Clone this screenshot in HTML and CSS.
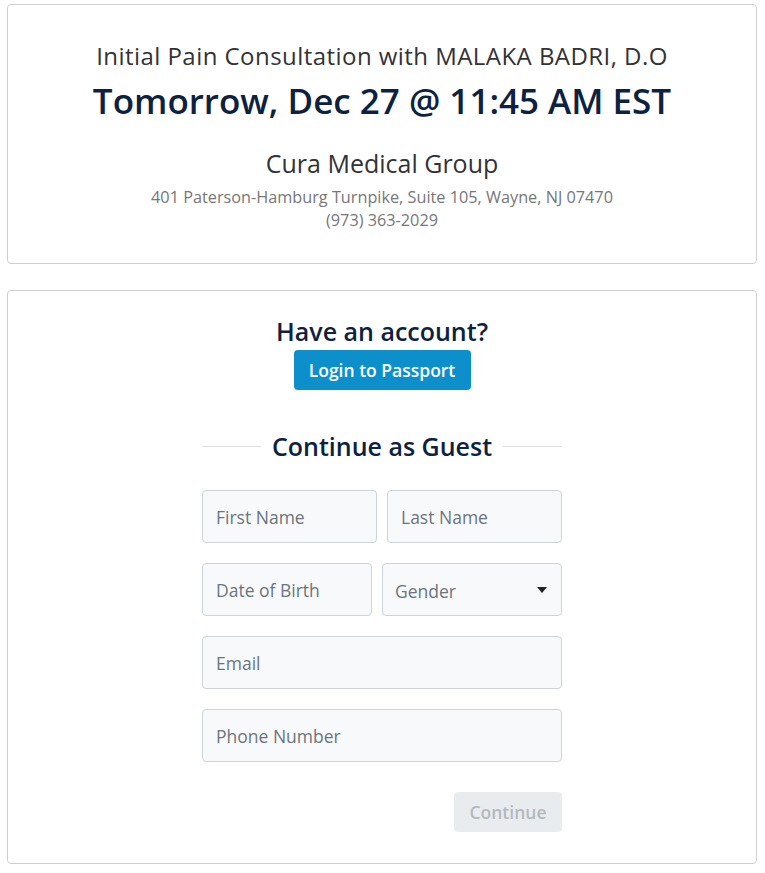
FILE: index.html
```html
<!DOCTYPE html>
<html>
<head>
<meta charset="utf-8">
<link rel="stylesheet" href="styles.css">
</head>
<body>
<div class="page">
  <section class="card summary">
    <div class="appt-title">Initial Pain Consultation with MALAKA BADRI, D.O</div>
    <div class="appt-time">Tomorrow, Dec 27 @ 11:45 AM EST</div>
    <div class="practice">Cura Medical Group</div>
    <div class="address first">401 Paterson-Hamburg Turnpike, Suite 105, Wayne, NJ 07470</div>
    <div class="address">(973) 363-2029</div>
  </section>
  <section class="card login">
    <div class="heading">Have an account?</div>
    <button class="btn-primary">Login to Passport</button>
    <div class="divider"><span class="line"></span><span class="heading">Continue as Guest</span><span class="line"></span></div>
    <form class="form">
      <div class="row r1">
        <div class="field">First Name</div>
        <div class="field">Last Name</div>
      </div>
      <div class="row r2">
        <div class="field">Date of Birth</div>
        <div class="field select"><span>Gender</span><span class="caret"></span></div>
      </div>
      <div class="field">Email</div>
      <div class="field">Phone Number</div>
      <div class="actions"><button type="button" class="btn-disabled">Continue</button></div>
    </form>
  </section>
</div>
</body>
</html>
```
FILE: styles.css
```css
* { box-sizing: border-box; }
body {
  margin: 0;
  font-family: "Open Sans", "Noto Sans", sans-serif;
  background: #fff;
  color: #333;
}
.page {
  padding: 4px 8px 0 7px;
  display: flex;
  flex-direction: column;
  gap: 26px;
}
.card {
  border: 1px solid #cfcfcf;
  border-radius: 4px;
  width: 750px;
  display: flex;
  flex-direction: column;
  align-items: center;
}
.summary {
  height: 260px;
  padding-top: 35px;
}
.appt-title {
  font-size: 24px;
  letter-spacing: 0.45px;
  line-height: 32px;
  color: #333;
}
.appt-time {
  font-size: 35px;
  font-weight: 600;
  color: #0d2240;
  line-height: 46px;
  margin-top: 6px;
}
.practice {
  font-size: 25px;
  line-height: 34px;
  color: #333;
  margin-top: 22px;
}
.address {
  font-size: 16.25px;
  line-height: 23px;
  color: #777;
}
.address.first { margin-top: 6px; }
.login {
  height: 574px;
  padding-top: 22px;
}
.heading {
  font-size: 25px;
  font-weight: 600;
  color: #0d2240;
  line-height: 36px;
}
.btn-primary {
  margin-top: 1px;
  width: 177px;
  height: 40px;
  background: #0d8fcc;
  color: #fff;
  border: 0;
  border-radius: 4px;
  font-family: inherit;
  font-size: 17.5px;
  font-weight: 600;
}
.divider {
  margin-top: 38px;
  width: 360px;
  display: flex;
  align-items: center;
  gap: 11px;
}
.divider .line {
  flex: 1;
  height: 1px;
  background: #ddd;
}
.form {
  margin-top: 26px;
  width: 360px;
  display: flex;
  flex-direction: column;
  gap: 20px;
}
.row {
  display: grid;
  gap: 10px;
}
.r1 { grid-template-columns: 175px 175px; }
.r2 { grid-template-columns: 170px 180px; }
.field {
  height: 53px;
  border: 1px solid #ced4da;
  border-radius: 4px;
  background: #f8f9fa;
  color: #6c757d;
  font-size: 17.5px;
  display: flex;
  align-items: center;
  padding-left: 13px;
}
.select {
  justify-content: space-between;
  padding-left: 12px;
  padding-right: 14px;
  padding-top: 2px;
}
.caret {
  width: 0;
  height: 0;
  border-left: 5px solid transparent;
  border-right: 5px solid transparent;
  border-top: 6px solid #222;
  margin-top: -2px;
}
.actions {
  display: flex;
  justify-content: flex-end;
  margin-top: 10px;
}
.btn-disabled {
  width: 108px;
  height: 40px;
  border: 0;
  border-radius: 4px;
  background: #e9ecef;
  color: #b4b9bd;
  font-family: inherit;
  font-size: 17.5px;
  font-weight: 600;
}
```
